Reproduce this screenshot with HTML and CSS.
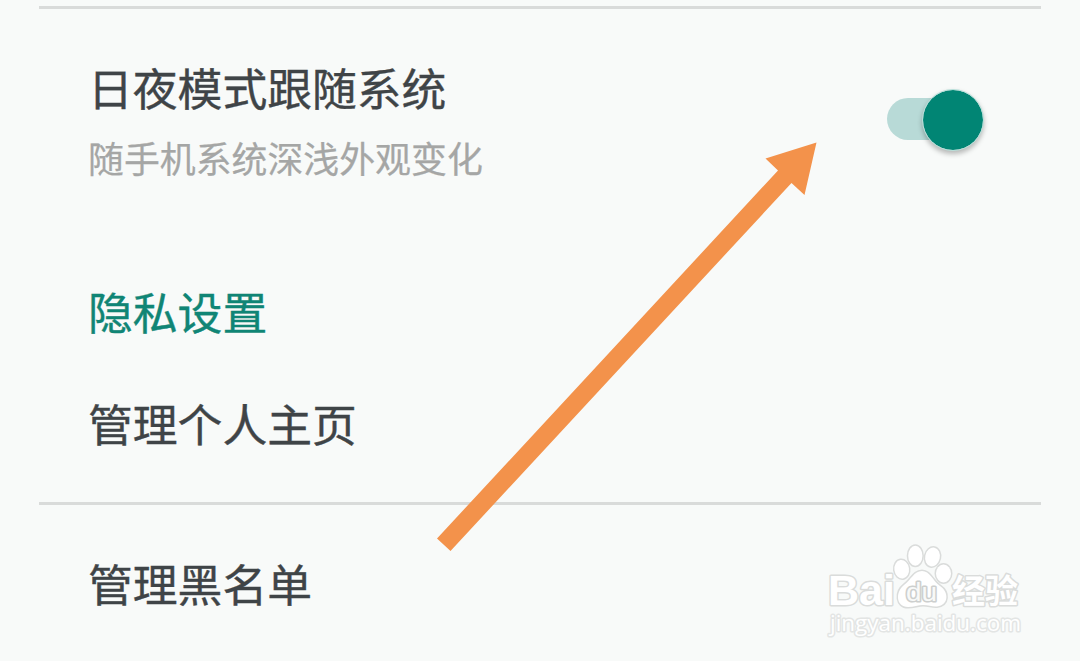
FILE: index.html
```html
<!DOCTYPE html>
<html lang="zh-CN">
<head>
<meta charset="UTF-8">
<title>设置</title>
<link rel="stylesheet" href="styles.css">
</head>
<body>
<main class="settings">
  <section class="row row-theme">
    <div class="labels">
      <div class="title">日夜模式跟随系统</div>
      <div class="subtitle">随手机系统深浅外观变化</div>
    </div>
    <div class="switch"><span class="thumb"></span></div>
  </section>
  <h2 class="heading">隐私设置</h2>
  <section class="row row-home"><div class="title">管理个人主页</div></section>
  <section class="row row-block"><div class="title">管理黑名单</div></section>
</main>
<svg class="arrow" viewBox="0 0 1080 661"><path d="M437 538.5L778 170.5L765.5 158.5L816.5 142.5L804.5 195L791.5 183L450.5 551Z"/></svg>
<svg class="watermark" viewBox="810 530 230 120">
  <g class="mark">
    <text x="828" y="605" class="logo" textLength="67" lengthAdjust="spacingAndGlyphs">Bai</text>
    <ellipse cx="901.7" cy="569.3" rx="7.3" ry="9.3" transform="rotate(-8 901.7 569.3)"/>
    <ellipse cx="915.3" cy="555.7" rx="7.1" ry="10"/>
    <ellipse cx="932.5" cy="557" rx="7.3" ry="9.5" transform="rotate(12 932.5 557)"/>
    <ellipse cx="943.5" cy="573.5" rx="7.5" ry="9"/>
    <path d="M922 571C914 571 911 580 904 585C895 592 896 607 908 607C914 607 918 605 923 605C929 605 932 607 937 606.500C949 605 949 592 940 586C932 580 930 571 922 571Z"/>
    <text x="906" y="601" class="du" textLength="31" lengthAdjust="spacingAndGlyphs">du</text>
    <text x="952" y="602.500" class="cn" textLength="66">经验</text>
    <text x="830" y="631" class="url" textLength="191" lengthAdjust="spacingAndGlyphs">jingyan.baidu.com</text>
  </g>
</svg>
</body>
</html>
```
FILE: styles.css
```css
* { box-sizing: border-box; }
body { margin: 0; width: 1080px; height: 661px; overflow: hidden; position: relative; background: #f8faf9; font-family: "Noto Sans CJK SC", sans-serif; }
.settings { padding: 6px 39px 0; }
.row { padding: 0 49px; border-top: 3px solid #d9dbda; }
.row-theme { display: flex; justify-content: space-between; height: 268px; padding-top: 45px; }
.title { font-size: 44.8px; line-height: 66px; color: #3f4447; white-space: nowrap; -webkit-text-stroke: .4px currentColor; }
.subtitle { font-size: 35.9px; line-height: 54px; margin-top: 10px; color: #a5a6a5; -webkit-text-stroke: .25px currentColor; }
.switch { position: relative; width: 78px; height: 42px; margin: 44px 27px 0 0; border-radius: 21px; background: #b8dad7; }
.thumb { position: absolute; left: 34.5px; top: -9.5px; width: 62px; height: 62px; border: 1px solid #b8e0da; background-clip: padding-box; border-radius: 50%; background-color: #018574; box-shadow: 0 3px 5px #0004; }
.heading { margin: 0; padding: 4px 49px 0; height: 112px; font-size: 44.8px; line-height: 66px; font-weight: 400; color: #108575; -webkit-text-stroke: .4px currentColor; }
.row-home { height: 116px; border: 0; padding-top: 4px; }
.row-block { padding-top: 45px; }
.arrow { position: absolute; left: 0; top: 0; width: 1080px; height: 661px; fill: #f3924b; }
.watermark { position: absolute; left: 810px; top: 530px; width: 230px; height: 120px; }
.mark { fill: #fff; stroke: #dadcdb; stroke-width: 3; paint-order: stroke; stroke-linejoin: round; }
.logo { font: bold 43px "Liberation Sans", sans-serif; }
.du { font: 25px "Liberation Sans", sans-serif; stroke: #cdcfce; fill: #f8f9f8; }
.cn { font: bold 33px "Noto Sans CJK SC", sans-serif; }
.url { font: 22px "Open Sans", sans-serif; stroke: #e3e5e4; }
```
